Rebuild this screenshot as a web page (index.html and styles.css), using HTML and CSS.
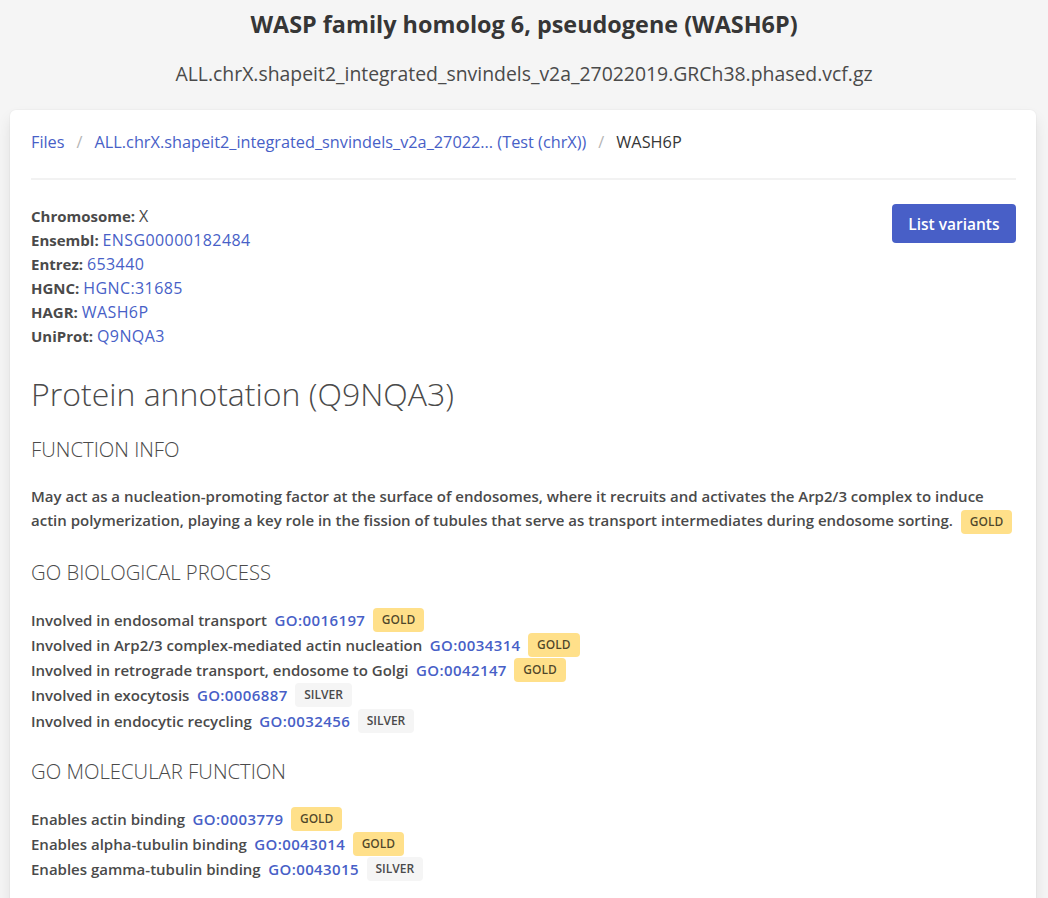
FILE: index.html
```html
<!DOCTYPE html>
<html lang="en">
<head>
<meta charset="utf-8">
<title>WASH6P</title>
<link rel="stylesheet" href="styles.css">
</head>
<body>
<header class="page-head">
  <h1 class="title">WASP family homolog 6, pseudogene (WASH6P)</h1>
  <p class="subtitle">ALL.chrX.shapeit2_integrated_snvindels_v2a_27022019.GRCh38.phased.vcf.gz</p>
</header>
<main class="box">
  <nav class="breadcrumb">
    <a href="#">Files</a>
    <span class="sep">/</span>
    <a href="#">ALL.chrX.shapeit2_integrated_snvindels_v2a_27022... (Test (chrX))</a>
    <span class="sep">/</span>
    <span class="current">WASH6P</span>
  </nav>
  <hr class="divider">
  <section class="gene-row">
    <div class="gene-info">
      <div><b>Chromosome:</b> <span class="val">X</span></div>
      <div><b>Ensembl:</b> <a class="val" href="#">ENSG00000182484</a></div>
      <div><b>Entrez:</b> <a class="val" href="#">653440</a></div>
      <div><b>HGNC:</b> <a class="val" href="#">HGNC:31685</a></div>
      <div><b>HAGR:</b> <a class="val" href="#">WASH6P</a></div>
      <div><b>UniProt:</b> <a class="val" href="#">Q9NQA3</a></div>
    </div>
    <button class="button">List variants</button>
  </section>
  <h2 class="section-title">Protein annotation (Q9NQA3)</h2>
  <h3 class="sub-title">FUNCTION INFO</h3>
  <p class="function-text">May act as a nucleation-promoting factor at the surface of endosomes, where it recruits and activates the Arp2/3 complex to induce actin polymerization, playing a key role in the fission of tubules that serve as transport intermediates during endosome sorting. <span class="tag gold">GOLD</span></p>
  <h3 class="sub-title">GO BIOLOGICAL PROCESS</h3>
  <ul class="go-list">
    <li><span>Involved in endosomal transport</span><a href="#">GO:0016197</a><span class="tag gold">GOLD</span></li>
    <li><span>Involved in Arp2/3 complex-mediated actin nucleation</span><a href="#">GO:0034314</a><span class="tag gold">GOLD</span></li>
    <li><span>Involved in retrograde transport, endosome to Golgi</span><a href="#">GO:0042147</a><span class="tag gold">GOLD</span></li>
    <li><span>Involved in exocytosis</span><a href="#">GO:0006887</a><span class="tag silver">SILVER</span></li>
    <li><span>Involved in endocytic recycling</span><a href="#">GO:0032456</a><span class="tag silver">SILVER</span></li>
  </ul>
  <h3 class="sub-title">GO MOLECULAR FUNCTION</h3>
  <ul class="go-list">
    <li><span>Enables actin binding</span><a href="#">GO:0003779</a><span class="tag gold">GOLD</span></li>
    <li><span>Enables alpha-tubulin binding</span><a href="#">GO:0043014</a><span class="tag gold">GOLD</span></li>
    <li><span>Enables gamma-tubulin binding</span><a href="#">GO:0043015</a><span class="tag silver">SILVER</span></li>
  </ul>
</main>
</body>
</html>
```
FILE: styles.css
```css
* { box-sizing: border-box; }
html, body { margin: 0; padding: 0; }
body {
  background: #f5f5f5;
  font-family: "Open Sans", "Noto Sans", sans-serif;
  font-size: 15px;
  line-height: 24px;
  color: #4a4a4a;
}
a { color: #485fc7; text-decoration: none; }
.page-head { text-align: center; padding-top: 8px; }
.title {
  margin: 0;
  font-size: 23.4px;
  line-height: 32px;
  font-weight: 700;
  color: #363636;
}
.subtitle {
  margin: 20px 0 0;
  font-size: 19.4px;
  line-height: 28px;
  font-weight: 400;
  color: #4a4a4a;
}
.box {
  margin: 22px 12px 0 10px;
  background: #fff;
  border-radius: 6px;
  box-shadow: 0 0.5em 1em -0.125em rgba(10,10,10,0.1), 0 0 0 1px rgba(10,10,10,0.02);
  padding: 20px 20px 20px 21px;
  min-height: 800px;
}
.breadcrumb { display: flex; align-items: center; font-size: 16.3px; }
.breadcrumb a { font-weight: 500; }
.breadcrumb .sep { color: #b5b5b5; padding: 0 12px; }
.breadcrumb .current { color: #363636; font-weight: 500; }
.divider { border: 0; height: 2px; background: #f2f2f2; margin: 24px 0; }
.gene-row { display: flex; justify-content: space-between; align-items: flex-start; }
.gene-info b { font-weight: 700; color: #4a4a4a; }
.gene-info .val { font-size: 16px; letter-spacing: 0.4px; font-weight: 500; }
.button {
  font-family: inherit;
  background: #485fc7;
  color: #fff;
  border: 0;
  border-radius: 4px;
  font-size: 15.5px;
  font-weight: 600;
  padding: 0 16.5px;
  height: 39px;
}
.section-title {
  margin: 26px 0 0;
  font-size: 32px;
  line-height: 40px;
  font-weight: 300;
  color: #4a4a4a;
}
.sub-title {
  margin: 21px 0 0;
  font-size: 20.3px;
  line-height: 28px;
  font-weight: 300;
  color: #4a4a4a;
}
.function-text { margin: 21px 0 24px; font-weight: 600; }
.go-list { list-style: none; margin: 21px 0 24px; padding: 0; font-weight: 600; }
.go-list li { display: flex; align-items: center; gap: 7.5px; height: 25.25px; }
.go-list a { font-weight: 600; letter-spacing: 0.4px; }
.tag {
  display: inline-block;
  font-size: 12px;
  line-height: 24px;
  height: 24px;
  padding: 0 9px;
  border-radius: 4px;
  font-weight: 600;
  vertical-align: middle;
}
.function-text .tag { margin-left: 4px; }
.gold { background: #ffe08a; color: rgba(0,0,0,0.7); }
.silver { background: #f5f5f5; color: #4a4a4a; }
```
